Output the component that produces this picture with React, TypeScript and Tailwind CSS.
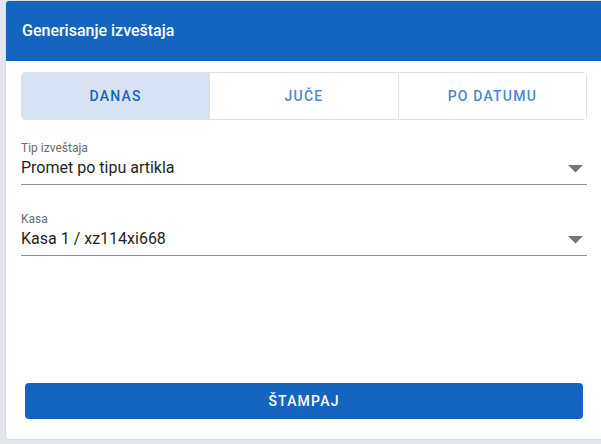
export default function App() {
  const tabs = ["DANAS", "JUČE", "PO DATUMU"];
  const active = 0;

  return (
    <div
      className="h-[444px] w-[601px] overflow-hidden bg-[#e4e6ee] pl-[5px]"
      style={{ fontFamily: "Roboto, 'Noto Sans', sans-serif" }}
    >
      <div className="flex h-[440px] w-[610px] flex-col overflow-hidden rounded-[4px] border border-[#d9dbe3] bg-white">
        <div className="flex h-[60px] shrink-0 items-center bg-[#1565c0] px-4">
          <h1 className="text-[16px] font-medium text-white">Generisanje izveštaja</h1>
        </div>

        <div className="flex flex-1 flex-col pr-[24px] pl-[15px]">
          <div className="mt-[11px] flex h-[48px] w-[566px] overflow-hidden rounded-[4px] border border-[#e0e0e0]">
            {tabs.map((t, i) => (
              <div
                key={t}
                className={
                  "flex flex-1 items-center justify-center text-[14px] font-medium tracking-[1.2px] " +
                  (i > 0 ? "border-l border-[#e0e0e0] " : "") +
                  (i === active ? "bg-[#d7e3f4] text-[#1a62bf]" : "bg-white text-[#4a87d2]")
                }
              >
                {t}
              </div>
            ))}
          </div>

          <Field label="Tip izveštaja" value="Promet po tipu artikla" className="mt-[21px]" />
          <Field label="Kasa" value="Kasa 1 / xz114xi668" className="mt-[27px]" />

          <div className="flex-1" />

          <button className="mb-[20px] ml-[4px] h-[36px] w-[558px] rounded-[4px] bg-[#1565c0] text-[14px] font-medium tracking-[1.2px] text-white">
            ŠTAMPAJ
          </button>
        </div>
      </div>
    </div>
  );
}

function Field({ label, value, className }: { label: string; value: string; className?: string }) {
  return (
    <div className={"w-[566px] border-b border-[#8f8f8f] " + (className || "")}>
      <div className="text-[12px] leading-[14px] text-[#6b6b6b]">{label}</div>
      <div className="flex h-[29px] items-start justify-between pt-[2px]">
        <span className="text-[16px] leading-[22px] text-[#1f1f1f]">{value}</span>
        <svg width="15" height="8" viewBox="0 0 15 8" className="mt-[8px] mr-[4px]">
          <polygon points="0,0 15,0 7.5,7.5" fill="#757575" />
        </svg>
      </div>
    </div>
  );
}
